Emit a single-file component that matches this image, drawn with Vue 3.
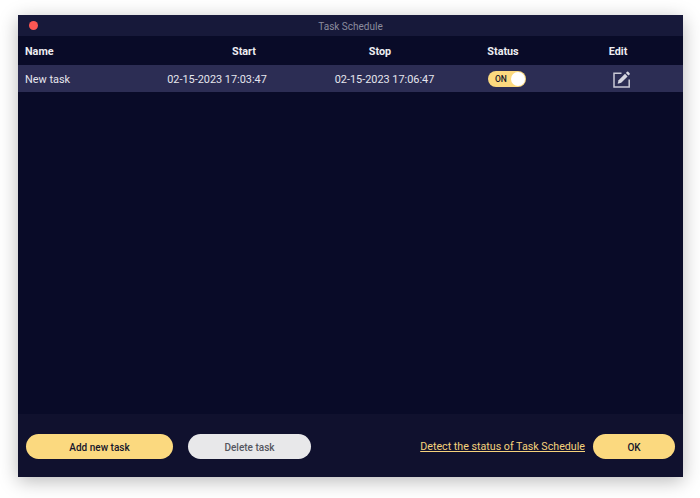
<script setup>
const headers = ['Name', 'Start', 'Stop', 'Status', 'Edit']
const task = { name: 'New task', start: '02-15-2023 17:03:47', stop: '02-15-2023 17:06:47' }
</script>

<template>
  <div class="page">
    <div class="window">
      <div class="titlebar">
        <span class="close"></span>
        <span class="title">Task Schedule</span>
      </div>
      <div class="table">
        <div class="head">
          <span v-for="h in headers" :key="h">{{ h }}</span>
        </div>
        <div class="row">
          <span class="cell name">{{ task.name }}</span>
          <span class="cell">{{ task.start }}</span>
          <span class="cell">{{ task.stop }}</span>
          <span class="toggle"><b>ON</b><i></i></span>
          <span class="edit">
            <svg width="18" height="17" viewBox="0 0 18 17" fill="none">
              <path d="M8.5 2.2H1V16H16.2V8.5" stroke="#c9c9d6" stroke-width="1.5" />
              <path d="M4.6 12.8L5.6 9.2L12 2.8L14.6 5.4L8.2 11.8Z" fill="#d6d6e0" />
              <path d="M12.9 1.9L14 .8Q14.6 .3 15.2 .8L16.6 2.2Q17.1 2.8 16.6 3.4L15.5 4.5Z" fill="#d6d6e0" />
            </svg>
          </span>
        </div>
      </div>
      <div class="footer">
        <button class="btn add">Add new task</button>
        <button class="btn del">Delete task</button>
        <a class="link">Detect the status of Task Schedule</a>
        <button class="btn ok">OK</button>
      </div>
    </div>
  </div>
</template>

<style>
html, body { margin: 0; background: #fff; }
</style>

<style scoped>
.page {
  width: 700px;
  height: 498px;
  padding: 15px 17px 21px 18px;
  box-sizing: border-box;
  font-family: Roboto, "Liberation Sans", sans-serif;
  overflow: hidden;
}
.window {
  height: 100%;
  display: flex;
  flex-direction: column;
  background: #090b28;
  box-shadow: 0 4px 18px rgba(0, 0, 0, 0.28);
}
.titlebar {
  height: 21px;
  flex: none;
  position: relative;
  background: #17193a;
  display: flex;
  align-items: center;
  justify-content: center;
  padding-top: 1px;
  box-sizing: border-box;
}
.close {
  position: absolute;
  left: 11px;
  top: 6px;
  width: 9px;
  height: 9px;
  border-radius: 50%;
  background: #fc5753;
}
.title {
  font-size: 10px;
  color: #8b8c9e;
}
.table { flex: 1; }
.head {
  height: 29px;
  display: grid;
  grid-template-columns: 158px 136px 136px 110px 120px;
  align-items: center;
  font-size: 10.8px;
  font-weight: 700;
  color: #eeeef2;
  padding-top: 1px;
  box-sizing: border-box;
}
.head span { text-align: center; }
.head span:first-child { text-align: left; padding-left: 7px; }
.row {
  height: 27px;
  display: grid;
  grid-template-columns: 132px 134px 201px 44px 1fr;
  align-items: center;
  background: #2c2d54;
  font-size: 10.9px;
  color: #e6e6ee;
}
.cell { text-align: center; white-space: nowrap; padding-top: 2px; }
.cell.name { text-align: left; padding-left: 7px; }
.toggle {
  justify-self: center;
  width: 38px;
  height: 16px;
  border-radius: 8px;
  background: #fbd97f;
  display: flex;
  align-items: center;
  justify-content: space-between;
  padding: 0 1px 0 7px;
  box-sizing: border-box;
}
.toggle b {
  font-size: 8.5px;
  font-weight: 500;
  color: #15162c;
}
.toggle i {
  width: 14px;
  height: 14px;
  border-radius: 50%;
  background: #fff;
}
.edit {
  padding-left: 84px;
  display: flex;
  align-items: center;
  padding-top: 2px;
}
.footer {
  height: 63px;
  flex: none;
  background: #10112e;
  display: flex;
  align-items: center;
  padding: 2px 8px 0;
  box-sizing: border-box;
}
.btn {
  height: 25px;
  border: 0;
  border-radius: 13px;
  font-family: inherit;
  font-size: 10px;
  font-weight: 500;
  padding: 1px 0 0;
}
.add { width: 147px; background: #fbd97f; color: #15162c; }
.del { width: 123px; margin-left: 15px; background: #e8e8ea; color: #55565f; }
.ok { width: 82px; margin-left: 8px; background: #fbd97f; color: #15162c; }
.link {
  margin-left: auto;
  font-size: 10.7px;
  font-weight: 400;
  color: #f5d27c;
  text-decoration: underline;
}
</style>
